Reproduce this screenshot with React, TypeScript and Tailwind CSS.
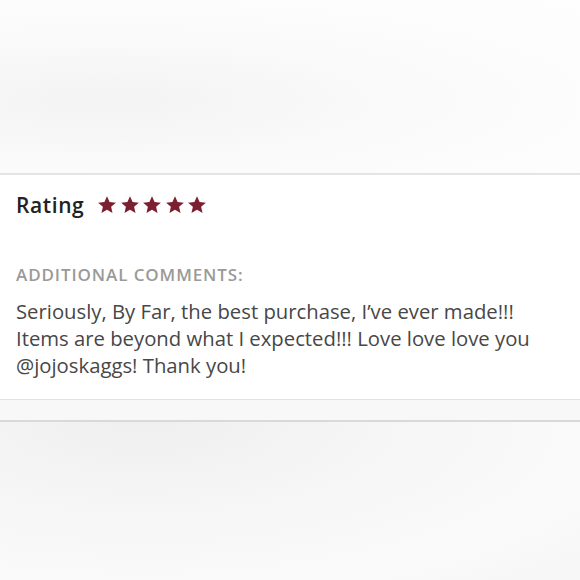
const Star = () => (
  <svg viewBox="0 0 24 24" className="w-[20px] h-[20px]" fill="#7b1f31">
    <path d="M12 1.5l3.1 6.95 7.55.72-5.72 5.02 1.7 7.42L12 17.75l-6.63 3.86 1.7-7.42L1.35 9.17l7.55-.72z" />
  </svg>
);

export default function App() {
  return (
    <div
      className="w-[580px] h-[580px] flex flex-col bg-white overflow-hidden"
      style={{ fontFamily: '"Open Sans", Lato, sans-serif' }}
    >
      <div className="h-[173px] bg-[radial-gradient(ellipse_at_18%_58%,#f4f3f4_0%,#fafafa_45%,#fcfcfc_70%,#fefefe_100%)]" />
      <div className="h-[2px] bg-[#e6e4e2]" />
      <div className="h-[224px] bg-white px-4 pt-[15px]">
        <div className="flex items-center gap-[13px]">
          <span className="text-[21px] leading-[30px] font-[550] tracking-[0.6px] text-[#222]">Rating</span>
          <div className="flex gap-[2.5px]">
            <Star />
            <Star />
            <Star />
            <Star />
            <Star />
          </div>
        </div>
        <div className="mt-[43px] text-[17px] leading-[24px] font-semibold uppercase tracking-[0.9px] text-[#9a9a98]">
          Additional Comments:
        </div>
        <p className="mt-[11px] text-[20.3px] leading-[27px] text-[#474747]">
          Seriously, By Far, the best purchase, I’ve ever made!!!
          <br />
          Items are beyond what I expected!!! Love love love you
          <br />
          @jojoskaggs! Thank you!
        </p>
      </div>
      <div className="h-px bg-[#e2e2e2]" />
      <div className="h-[20px] bg-[#f8f8f8]" />
      <div className="h-[2px] bg-[#d9d9d7]" />
      <div className="flex-1 bg-[radial-gradient(ellipse_at_25%_0%,#efefef_0%,#f6f6f6_40%,#fafafa_75%,#f6f6f6_100%)]" />
    </div>
  );
}
